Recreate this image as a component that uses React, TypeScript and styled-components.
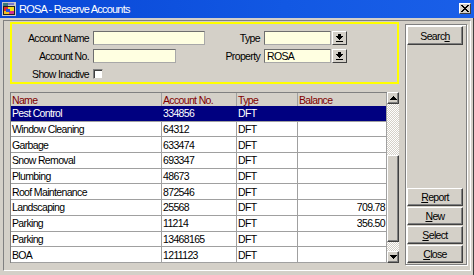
import React from "react";
import styled, { createGlobalStyle } from "styled-components";

const GlobalStyle = createGlobalStyle`
  html, body {
    margin: 0;
    padding: 0;
    background: #d4d0c8;
  }
  body {
    font-family: "Liberation Sans", Arial, sans-serif;
    font-size: 10.5px;
    letter-spacing: -0.65px;
    color: #000;
  }
  * {
    box-sizing: border-box;
  }
`;

const Window = styled.div`
  width: 474px;
  height: 275px;
  display: flex;
  flex-direction: column;
  background: #d4d0c8;
  overflow: hidden;
`;

const TitleBar = styled.div`
  height: 18px;
  flex: none;
  display: flex;
  align-items: center;
  gap: 3px;
  padding: 0 3px 0 2px;
  background: linear-gradient(90deg, #0846d6 0%, #1258e3 60%, #1a5fe8 100%);
  color: #fff;
`;

const TitleText = styled.span`
  flex: 1;
  font-size: 11px;
  letter-spacing: -0.8px;
  line-height: 18px;
  white-space: nowrap;
`;

const CloseBox = styled.div`
  width: 12px;
  height: 11px;
  margin-top: -1px;
  display: flex;
  align-items: center;
  justify-content: center;
  background: #d4d0c8;
  border: 1px solid;
  border-color: #fff #404040 #404040 #fff;
`;

const Body = styled.div`
  flex: 1;
  display: flex;
  border: 1px solid;
  border-top: none;
  border-color: #d4d0c8 #404040 #404040 #d4d0c8;
  padding: 2px 2px 5px 2px;
`;

const Panel = styled.div`
  flex: 1;
  display: flex;
  gap: 6px;
  border: 1px solid;
  border-color: #808080 #fff #fff #808080;
  padding: 1px 2px 5px 6px;
`;

const LeftColumn = styled.div`
  width: 389px;
  display: flex;
  flex-direction: column;
  gap: 8px;
`;

const SearchBox = styled.div`
  height: 62px;
  border: 2px solid #ffff00;
  padding: 7px 0 0 0;
  display: grid;
  grid-template-columns: 77px 112px 51px 83px;
  grid-auto-rows: 14px;
  column-gap: 4px;
  row-gap: 4px;
  align-items: center;
`;

const Label = styled.label`
  text-align: right;
  white-space: nowrap;
  line-height: 14px;
`;

const Field = styled.div<{ $w?: number }>`
  width: ${(p) => (p.$w ? `${p.$w}px` : "100%")};
  height: 14px;
  background: #ffffe1;
  border: 1px solid;
  border-color: #6e6e6e #a8a8a8 #a8a8a8 #6e6e6e;
  padding: 0 2px;
  line-height: 12px;
  white-space: nowrap;
`;

const ComboWrap = styled.div`
  display: flex;
  gap: 1px;
`;

const DropButton = styled.div`
  width: 15px;
  height: 14px;
  flex: none;
  display: flex;
  align-items: center;
  justify-content: center;
  background: #d4d0c8;
  border: 1px solid;
  border-color: #fff #404040 #404040 #fff;
`;

const Check = styled.div`
  width: 10px;
  height: 10px;
  background: #fff;
  border: 1px solid;
  border-color: #808080 #d4d0c8 #d4d0c8 #808080;
  box-shadow: inset 1px 1px 0 #404040;
`;

const Table = styled.div`
  height: 171px;
  display: flex;
`;

const Columns = styled.div`
  width: 377px;
  border-top: 1px solid #808080;
  border-left: 1px solid #808080;
  display: flex;
  flex-direction: column;
`;

const RowGrid = styled.div<{ $selected?: boolean; $header?: boolean }>`
  display: grid;
  grid-template-columns: 151px 75px 61px 89px;
  height: ${(p) => (p.$header ? "13px" : "15.7px")};
  flex: none;
  background: ${(p) => (p.$header ? "#d4d0c8" : p.$selected ? "#000080" : "#fff")};
  color: ${(p) => (p.$header ? "#800000" : p.$selected ? "#fff" : "#000")};
  border-bottom: ${(p) => (p.$header ? "none" : "1px solid #a0a0a0")};
`;

const Cell = styled.div<{ $right?: boolean; $selected?: boolean }>`
  border-right: 1px solid ${(p) => (p.$selected ? "#000080" : "#a0a0a0")};
  padding: 0 1px;
  text-align: ${(p) => (p.$right ? "right" : "left")};
  white-space: nowrap;
  overflow: hidden;
  display: flex;
  align-items: center;
  justify-content: ${(p) => (p.$right ? "flex-end" : "flex-start")};
`;

const ScrollBar = styled.div`
  width: 12px;
  display: flex;
  flex-direction: column;
`;

const ScrollButton = styled.div`
  width: 12px;
  height: 12px;
  flex: none;
  display: flex;
  align-items: center;
  justify-content: center;
  background: #d4d0c8;
  border: 1px solid;
  border-color: #fff #404040 #404040 #fff;
  box-shadow: inset -1px -1px 0 #808080;
`;

const Track = styled.div<{ $h?: number }>`
  height: ${(p) => (p.$h ? `${p.$h}px` : "auto")};
  flex: ${(p) => (p.$h ? "none" : "1")};
  background: repeating-conic-gradient(#ffffff 0 25%, #d4d0c8 0 50%) 0 0 / 2px 2px;
`;

const Thumb = styled.div`
  height: 87px;
  flex: none;
  background: #d4d0c8;
  border: 1px solid;
  border-color: #fff #404040 #404040 #fff;
  box-shadow: inset -1px -1px 0 #808080;
`;

const ButtonPanel = styled.div`
  width: 62px;
  height: 241px;
  margin-top: 2px;
  border: 1px solid #808080;
  box-shadow: inset 1px 1px 0 #fff, 1px 1px 0 #fff;
  padding: 1px 0 1px 1px;
  display: flex;
  flex-direction: column;
  gap: 1px;
`;

const Spacer = styled.div`
  flex: 1;
`;

const Button = styled.div<{ $h?: number }>`
  width: 56px;
  height: ${(p) => p.$h ?? 18}px;
  flex: none;
  display: flex;
  align-items: center;
  justify-content: center;
  background: #d4d0c8;
  border: 1px solid;
  border-color: #fff #404040 #404040 #fff;
  box-shadow: inset -1px -1px 0 #808080;
  white-space: nowrap;

  u {
    text-decoration: underline;
    text-underline-offset: 1px;
  }
`;

const AppIcon = () => (
  <svg width="14" height="14" viewBox="0 0 14 14" shapeRendering="crispEdges">
    <rect x="0" y="0" width="14" height="14" fill="#c8c8c8" />
    <rect x="1" y="1" width="5" height="3" fill="#3a7a7a" />
    <rect x="6" y="1" width="6" height="2" fill="#7a7ad0" />
    <rect x="1" y="4" width="12" height="9" fill="#202020" />
    <rect x="2" y="5" width="4" height="4" fill="#e02828" />
    <rect x="6" y="5" width="6" height="4" fill="#f0e020" />
    <rect x="2" y="9" width="5" height="3" fill="#f0c020" />
    <rect x="7" y="9" width="5" height="3" fill="#d03090" />
    <rect x="4" y="7" width="4" height="3" fill="#2850e0" />
  </svg>
);

const CloseIcon = () => (
  <svg width="8" height="7" viewBox="0 0 8 7" shapeRendering="crispEdges">
    <path d="M0 0h2v1h1v1h2v-1h1v-1h2v1h-1v1h-1v1h-1v1h1v1h1v1h1v1h-2v-1h-1v-1h-2v1h-1v1h-2v-1h1v-1h1v-1h1v-1h-1v-1h-1v-1h-1z" fill="#000" />
  </svg>
);

const DropArrow = () => (
  <svg width="7" height="8" viewBox="0 0 7 8" shapeRendering="crispEdges">
    <rect x="2" y="0" width="3" height="2" fill="#000" />
    <path d="M0 2h7v1h-1v1h-1v1h-1v1h-1v-1h-1v-1h-1v-1h-1z" fill="#000" />
    <rect x="0" y="7" width="7" height="1" fill="#000" />
  </svg>
);

const Triangle = ({ up }: { up?: boolean }) => (
  <svg width="7" height="4" viewBox="0 0 7 4" shapeRendering="crispEdges">
    {up ? (
      <path d="M3 0h1v1h1v1h1v1h1v1h-7v-1h1v-1h1v-1h1z" fill="#000" />
    ) : (
      <path d="M0 0h7v1h-1v1h-1v1h-1v1h-1v-1h-1v-1h-1v-1h-1z" fill="#000" />
    )}
  </svg>
);

const rows = [
  { name: "Pest Control", no: "334856", type: "DFT", balance: "" },
  { name: "Window Cleaning", no: "64312", type: "DFT", balance: "" },
  { name: "Garbage", no: "633474", type: "DFT", balance: "" },
  { name: "Snow Removal", no: "693347", type: "DFT", balance: "" },
  { name: "Plumbing", no: "48673", type: "DFT", balance: "" },
  { name: "Roof Maintenance", no: "872546", type: "DFT", balance: "" },
  { name: "Landscaping", no: "25568", type: "DFT", balance: "709.78" },
  { name: "Parking", no: "11214", type: "DFT", balance: "356.50" },
  { name: "Parking", no: "13468165", type: "DFT", balance: "" },
  { name: "BOA", no: "1211123", type: "DFT", balance: "" },
];

export default function App() {
  const selected = 0;

  return (
    <>
      <GlobalStyle />
      <Window>
        <TitleBar>
          <AppIcon />
          <TitleText>ROSA - Reserve Accounts</TitleText>
          <CloseBox>
            <CloseIcon />
          </CloseBox>
        </TitleBar>
        <Body>
          <Panel>
            <LeftColumn>
              <SearchBox>
                <Label>Account Name</Label>
                <Field />
                <Label>Type</Label>
                <ComboWrap>
                  <Field $w={67} />
                  <DropButton>
                    <DropArrow />
                  </DropButton>
                </ComboWrap>

                <Label>Account No.</Label>
                <Field $w={83} />
                <Label>Property</Label>
                <ComboWrap>
                  <Field $w={67}>ROSA</Field>
                  <DropButton>
                    <DropArrow />
                  </DropButton>
                </ComboWrap>

                <Label>Show Inactive</Label>
                <Check />
              </SearchBox>

              <Table>
                <Columns>
                  <RowGrid $header>
                    <Cell>Name</Cell>
                    <Cell>Account No.</Cell>
                    <Cell>Type</Cell>
                    <Cell>Balance</Cell>
                  </RowGrid>
                  {rows.map((r, i) => (
                    <RowGrid key={i} $selected={i === selected}>
                      <Cell $selected={i === selected}>{r.name}</Cell>
                      <Cell $selected={i === selected}>{r.no}</Cell>
                      <Cell $selected={i === selected}>{r.type}</Cell>
                      <Cell $right>{r.balance}</Cell>
                    </RowGrid>
                  ))}
                </Columns>
                <ScrollBar>
                  <ScrollButton>
                    <Triangle up />
                  </ScrollButton>
                  <Track $h={51} />
                  <Thumb />
                  <Track />
                  <ScrollButton>
                    <Triangle />
                  </ScrollButton>
                </ScrollBar>
              </Table>
            </LeftColumn>

            <ButtonPanel>
              <Button $h={19}>
                Searc<u>h</u>
              </Button>
              <Spacer />
              <Button>
                <u>R</u>eport
              </Button>
              <Button>
                <u>N</u>ew
              </Button>
              <Button>
                <u>S</u>elect
              </Button>
              <Button>
                <u>C</u>lose
              </Button>
            </ButtonPanel>
          </Panel>
        </Body>
      </Window>
    </>
  );
}
